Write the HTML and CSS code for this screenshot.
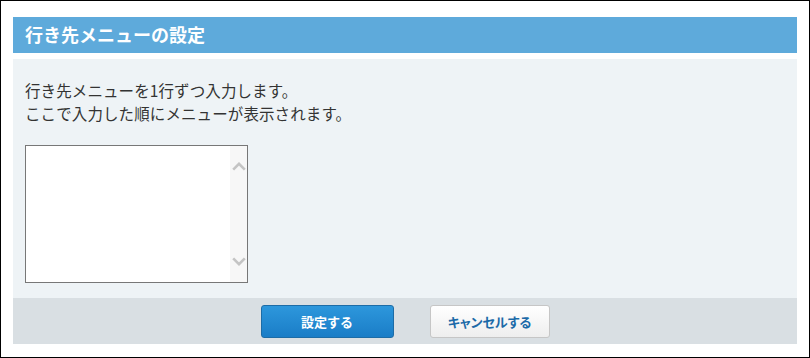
FILE: index.html
```html
<!DOCTYPE html>
<html lang="ja">
<head>
<meta charset="utf-8">
<title>行き先メニューの設定</title>
<link rel="stylesheet" href="styles.css">
</head>
<body>
<div class="frame">
  <div class="dialog">
    <h1 class="dialog-title">行き先メニューの設定</h1>
    <div class="dialog-body">
      <p class="desc">行き先メニューを1行ずつ入力します。<br>ここで入力した順にメニューが表示されます。</p>
      <div class="textbox">
        <textarea class="textbox-input"></textarea>
        <div class="scrollbar">
          <svg class="chev" width="14" height="9" viewBox="0 0 14 9"><path d="M1.2 7.6 L7 1.8 L12.8 7.6" fill="none" stroke="#c4c4c4" stroke-width="2.6"/></svg>
          <svg class="chev" width="14" height="9" viewBox="0 0 14 9"><path d="M1.2 1.4 L7 7.2 L12.8 1.4" fill="none" stroke="#c4c4c4" stroke-width="2.6"/></svg>
        </div>
      </div>
    </div>
    <div class="dialog-footer">
      <button class="btn btn-primary">設定する</button>
      <button class="btn btn-secondary">キャンセルする</button>
    </div>
  </div>
</div>
</body>
</html>
```

FILE: styles.css
```css
html, body {
  margin: 0;
  padding: 0;
  background: #fff;
}
body {
  font-family: "Noto Sans CJK JP", "Noto Sans", sans-serif;
  color: #333;
}
.frame {
  width: 810px;
  height: 358px;
  box-sizing: border-box;
  border: 1px solid #000;
  padding: 16px 12px 0 12px;
}
.dialog {
  display: flex;
  flex-direction: column;
}
.dialog-title {
  margin: 0 0 6px 0;
  height: 36px;
  background: #5eaadb;
  color: #fff;
  font-size: 18px;
  font-weight: bold;
  line-height: 35px;
  padding-left: 12px;
}
.dialog-body {
  background: #eef3f6;
  padding: 20px 12px 15px 12px;
}
.desc {
  margin: 0 0 20px 0;
  font-size: 15.5px;
  line-height: 23px;
  color: #333;
  letter-spacing: 0.1px;
}
.textbox {
  width: 223px;
  height: 138px;
  box-sizing: border-box;
  border: 1px solid #777;
  background: #fff;
  display: flex;
}
.textbox-input {
  flex: 1;
  border: none;
  outline: none;
  resize: none;
  overflow: hidden;
  margin: 0;
  padding: 2px;
  background: #fff;
}
.scrollbar {
  width: 17px;
  background: #f7f7f7;
  display: flex;
  flex-direction: column;
  justify-content: space-between;
  align-items: center;
  padding: 16px 0 16px 0;
}
.chev {
  display: block;
}
.dialog-footer {
  background: #d9dfe3;
  height: 46px;
  display: flex;
  justify-content: center;
  align-items: center;
  gap: 36px;
}
.btn {
  height: 33px;
  box-sizing: border-box;
  border-radius: 3px;
  font-family: "Noto Sans CJK JP", "Noto Sans", sans-serif;
  font-size: 13px;
  font-weight: bold;
  cursor: pointer;
  padding: 0;
}
.btn-primary {
  width: 133px;
  background: linear-gradient(#2d97dc, #1a7dc7);
  border: 1px solid #1d6ca6;
  color: #fff;
}
.btn-secondary {
  width: 120px;
  background: linear-gradient(#ffffff, #eeeeee);
  border: 1px solid #c6c6c6;
  color: #1b6aa8;
  font-feature-settings: "palt";
}
```
